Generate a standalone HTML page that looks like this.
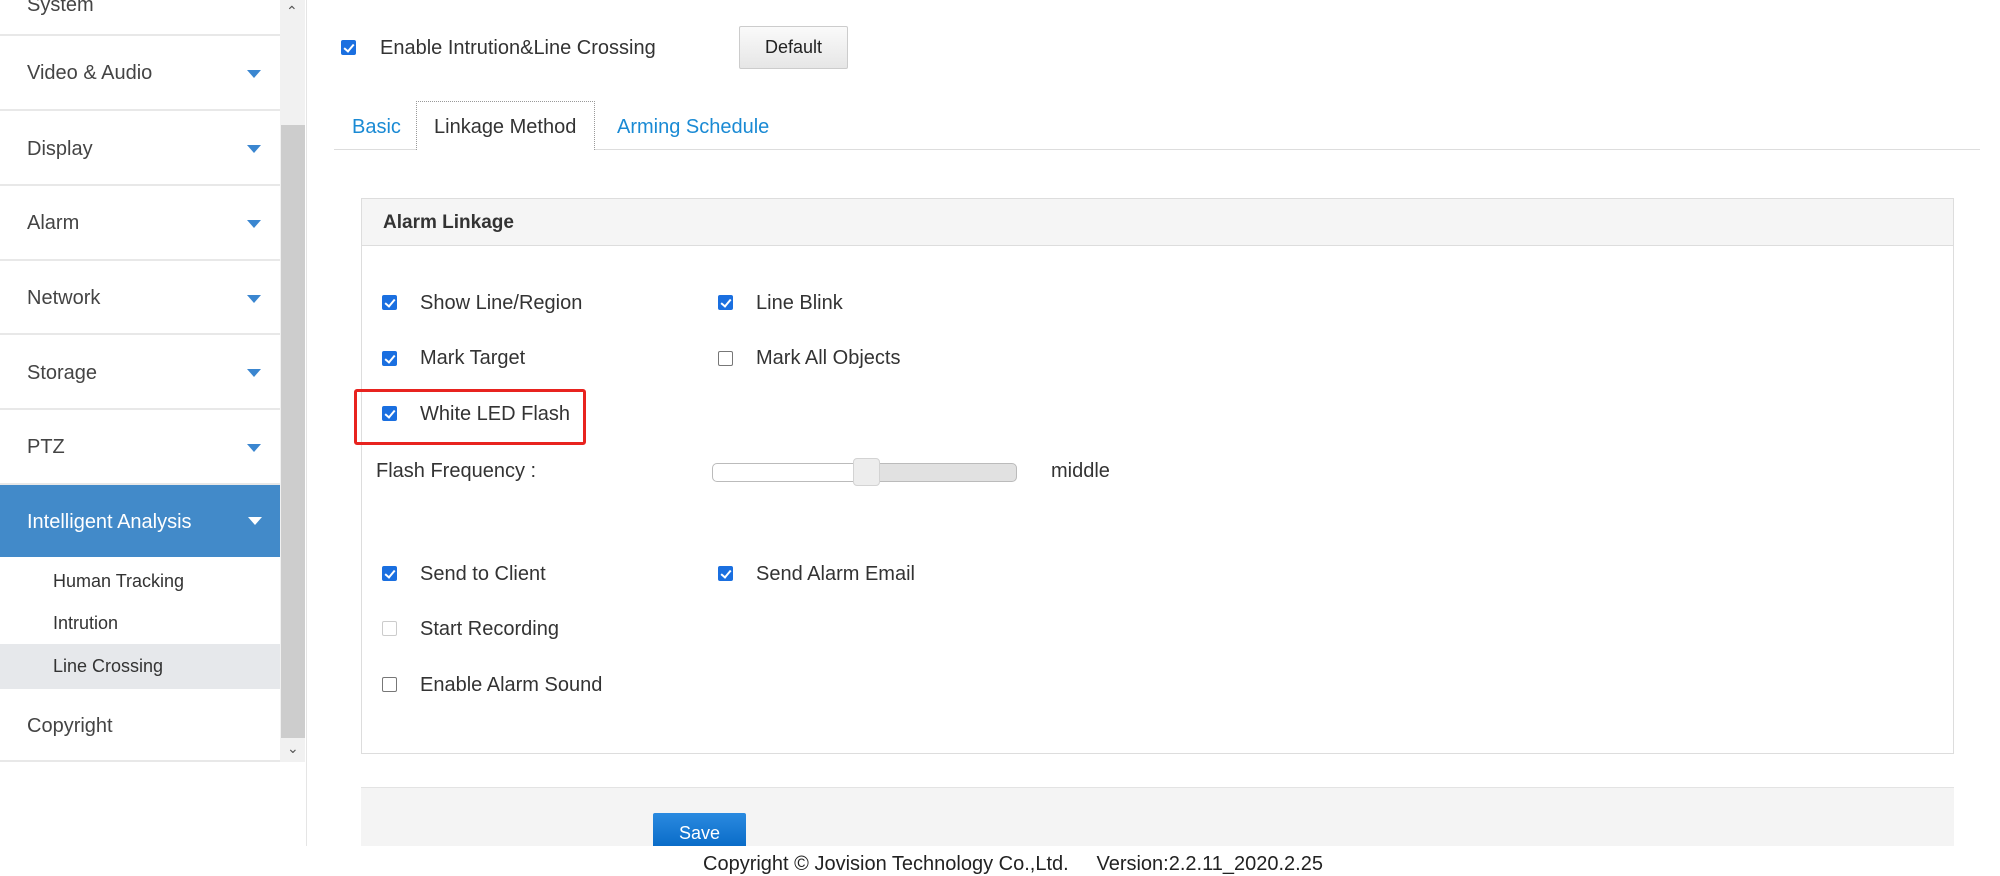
<!DOCTYPE html>
<html><head><meta charset="utf-8"><style>
*{margin:0;padding:0;box-sizing:border-box}
body{width:2000px;height:876px;overflow:hidden;background:#fff;font-family:"Liberation Sans",sans-serif;color:#333;position:relative}
.a{position:absolute}
.item{position:absolute;left:0;width:280px;border-bottom:2px solid #e8e8e8;font-size:20px;color:#444}
.item span{position:absolute;left:27px}
.arr{position:absolute;left:247px;width:0;height:0;border-left:7px solid transparent;border-right:7px solid transparent;border-top:8px solid #3a86d0}
.cb{position:absolute;width:15px;height:15px;border-radius:2px;background:#1a6fe0}
.cb::after{content:"";position:absolute;left:5px;top:2px;width:4px;height:8px;border:solid #fff;border-width:0 2px 2px 0;transform:rotate(40deg)}
.cb.off{background:#fff;border:1px solid #777}
.cb.off::after{display:none}
.cb.dis{border-color:#ccc}
.t{position:absolute;font-size:20px;color:#333}
</style></head><body>
<!-- sidebar -->
<div class="item" style="top:-40px;height:76px"><span style="top:34px">System</span></div>
<div class="item" style="top:36px;height:75px"><span style="top:26px">Video &amp; Audio</span><i class="arr" style="top:34px"></i></div>
<div class="item" style="top:111px;height:75px"><span style="top:27px">Display</span><i class="arr" style="top:34px"></i></div>
<div class="item" style="top:186px;height:75px"><span style="top:26px">Alarm</span><i class="arr" style="top:34px"></i></div>
<div class="item" style="top:261px;height:74px"><span style="top:26px">Network</span><i class="arr" style="top:34px"></i></div>
<div class="item" style="top:335px;height:75px"><span style="top:27px">Storage</span><i class="arr" style="top:34px"></i></div>
<div class="item" style="top:410px;height:75px"><span style="top:26px">PTZ</span><i class="arr" style="top:34px"></i></div>
<div class="a" style="left:0;top:485px;width:280px;height:72px;background:#428ac9;color:#fff;font-size:20px"><span style="position:absolute;left:27px;top:26px">Intelligent Analysis</span><i class="arr" style="top:32px;border-top-color:#fff;left:248px"></i></div>
<div class="a" style="left:53px;top:571px;font-size:18px;color:#333">Human Tracking</div>
<div class="a" style="left:53px;top:613px;font-size:18px;color:#333">Intrution</div>
<div class="a" style="left:0;top:644px;width:280px;height:45px;background:#e6e8eb"></div>
<div class="a" style="left:53px;top:656px;font-size:18px;color:#333">Line Crossing</div>
<div class="item" style="top:689px;height:73px"><span style="top:26px">Copyright</span></div>
<!-- scrollbar -->
<div class="a" style="left:280px;top:0;width:25px;height:762px;background:#f1f1f1"></div>
<div class="a" style="left:281px;top:125px;width:24px;height:613px;background:#cdcdcd"></div>
<div class="a" style="left:286px;top:3px;font-size:14px;color:#555">&#8963;</div>
<div class="a" style="left:287px;top:740px;font-size:14px;color:#555">&#8964;</div>
<div class="a" style="left:306px;top:0;width:1px;height:846px;background:#e5e5e5"></div>
<!-- top -->
<div class="cb" style="left:341px;top:40px"></div>
<div class="t" style="left:380px;top:37px">Enable Intrution&amp;Line Crossing</div>
<div class="a" style="left:739px;top:26px;width:109px;height:43px;border:1px solid #ccc;border-radius:2px;background:linear-gradient(#fafafa,#e6e6e6);font-size:18px;text-align:center;line-height:41px;color:#222">Default</div>
<div class="a" style="left:334px;top:149px;width:1646px;height:1px;background:#ddd"></div>
<div class="t" style="left:352px;top:116px;color:#1a8ad4">Basic</div>
<div class="a" style="left:416px;top:101px;width:179px;height:49px;border:1px dotted #999;border-bottom:none;background:#fff"></div>
<div class="t" style="left:434px;top:116px">Linkage Method</div>
<div class="t" style="left:617px;top:116px;color:#1a8ad4">Arming Schedule</div>
<!-- panel -->
<div class="a" style="left:361px;top:198px;width:1593px;height:556px;border:1px solid #ddd"></div>
<div class="a" style="left:362px;top:199px;width:1591px;height:47px;background:#f5f5f5;border-bottom:1px solid #ddd"></div>
<div class="t" style="left:383px;top:212px;font-weight:bold;font-size:19px;color:#333">Alarm Linkage</div>
<div class="cb" style="left:382px;top:295px"></div><div class="t" style="left:420px;top:292px">Show Line/Region</div>
<div class="cb" style="left:718px;top:295px"></div><div class="t" style="left:756px;top:292px">Line Blink</div>
<div class="cb" style="left:382px;top:351px"></div><div class="t" style="left:420px;top:347px">Mark Target</div>
<div class="cb off" style="left:718px;top:351px"></div><div class="t" style="left:756px;top:347px">Mark All Objects</div>
<div class="a" style="left:354px;top:389px;width:232px;height:56px;border:3px solid #e8231f;border-radius:3px"></div>
<div class="cb" style="left:382px;top:406px"></div><div class="t" style="left:420px;top:403px">White LED Flash</div>
<div class="t" style="left:376px;top:460px">Flash Frequency :</div>
<div class="a" style="left:712px;top:463px;width:305px;height:19px;border:1px solid #bbb;border-radius:5px;background:linear-gradient(90deg,#fff 0 47%,#e1e1e1 47%)"></div>
<div class="a" style="left:853px;top:458px;width:27px;height:28px;border:1px solid #d3d3d3;border-radius:4px;background:#ededed"></div>
<div class="t" style="left:1051px;top:460px">middle</div>
<div class="cb" style="left:382px;top:566px"></div><div class="t" style="left:420px;top:563px">Send to Client</div>
<div class="cb" style="left:718px;top:566px"></div><div class="t" style="left:756px;top:563px">Send Alarm Email</div>
<div class="cb off dis" style="left:382px;top:621px"></div><div class="t" style="left:420px;top:618px">Start Recording</div>
<div class="cb off" style="left:382px;top:677px"></div><div class="t" style="left:420px;top:674px">Enable Alarm Sound</div>
<!-- bottom bar -->
<div class="a" style="left:361px;top:787px;width:1593px;height:59px;background:#f4f4f4;border-top:1px solid #e3e3e3"></div>
<div class="a" style="left:653px;top:813px;width:93px;height:33px;background:linear-gradient(#2a8ae0,#0a6cc8);border-radius:2px 2px 0 0;color:#fff;font-size:18px;text-align:center;line-height:40px">Save</div>
<div class="a" style="left:0;top:846px;width:2000px;height:30px;background:#fff"></div>
<div class="a" style="left:703px;top:853px;font-size:20px;color:#222;white-space:pre">Copyright © Jovision Technology Co.,Ltd.     Version:2.2.11_2020.2.25</div>
</body></html>
